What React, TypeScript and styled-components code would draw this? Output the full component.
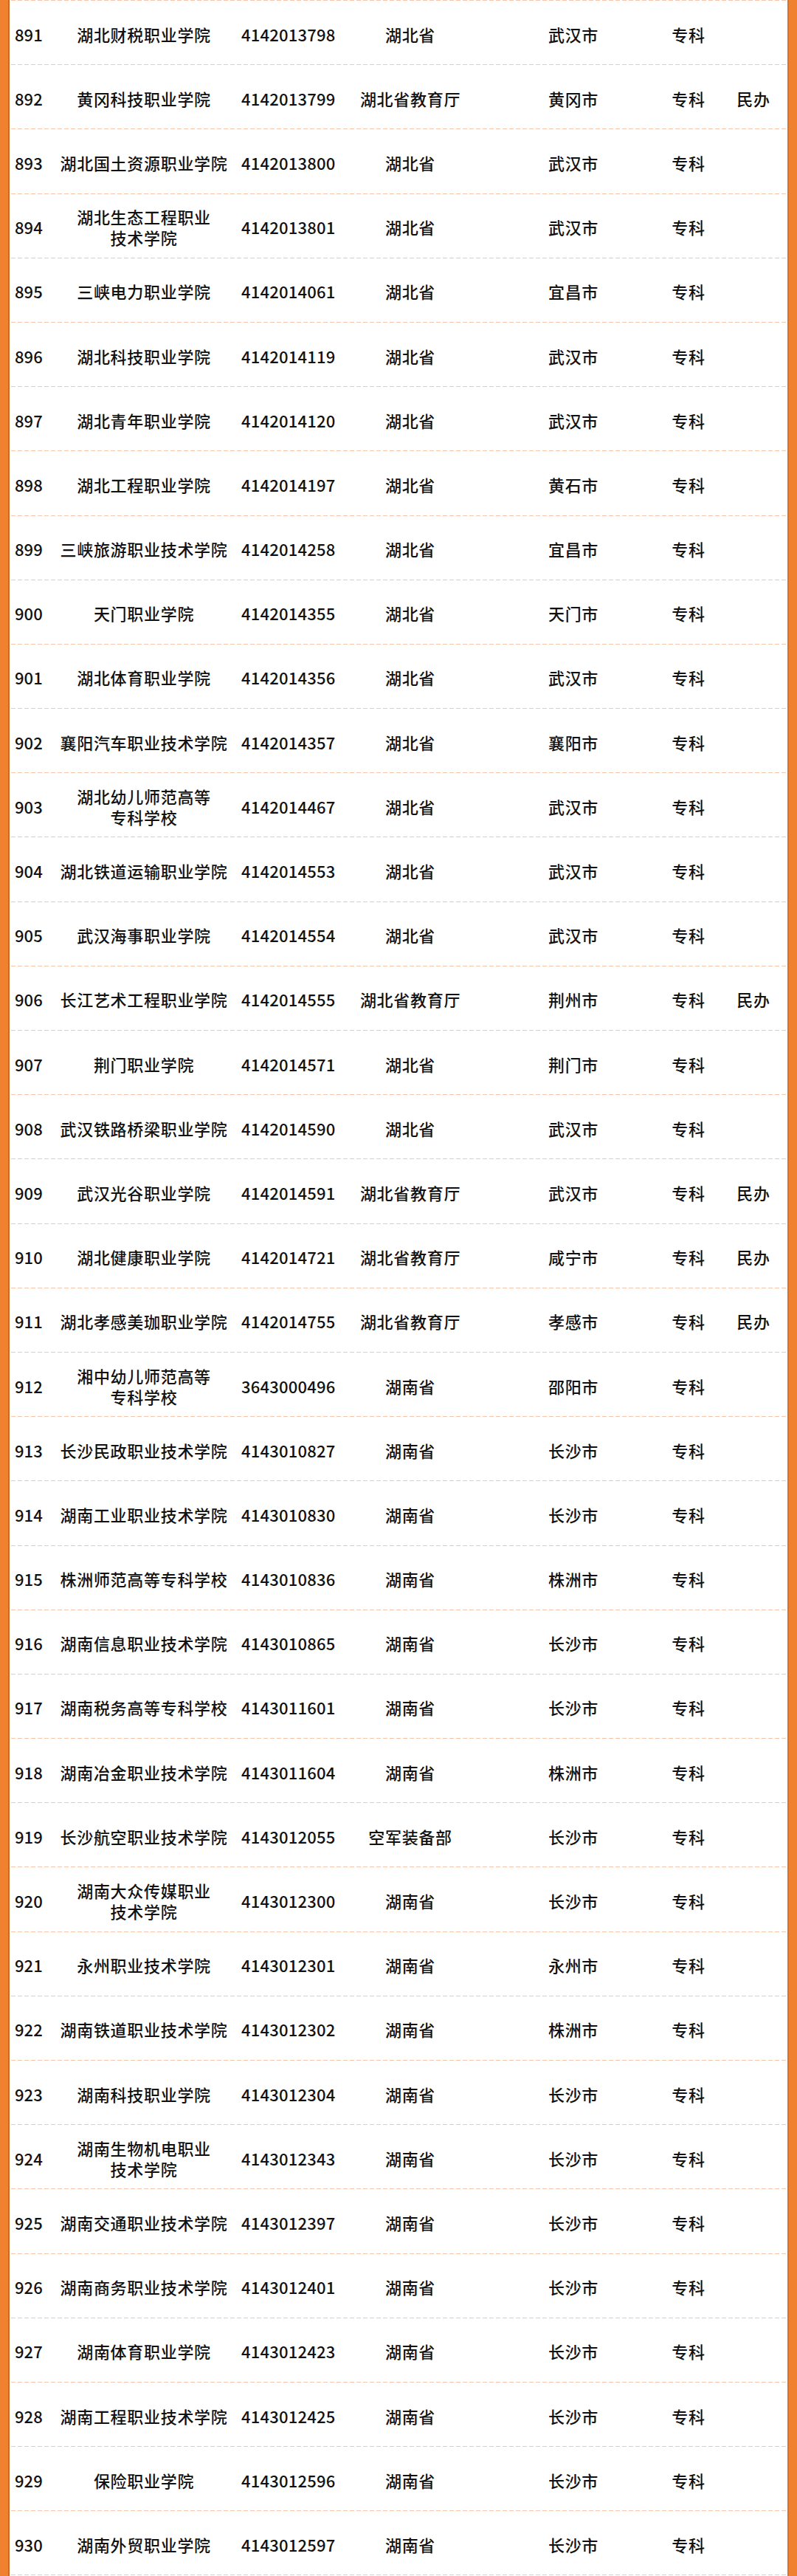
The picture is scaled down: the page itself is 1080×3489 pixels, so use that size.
import React from 'react'
import styled, { createGlobalStyle } from 'styled-components'

interface School {
    no: number,
    name: string[],
    code: string,
    dept: string,
    city: string,
    level: string,
    note?: string
}

const rows: School[] = [
    { no: 891, name: ['湖北财税职业学院'], code: '4142013798', dept: '湖北省', city: '武汉市', level: '专科' },
    { no: 892, name: ['黄冈科技职业学院'], code: '4142013799', dept: '湖北省教育厅', city: '黄冈市', level: '专科', note: '民办' },
    { no: 893, name: ['湖北国土资源职业学院'], code: '4142013800', dept: '湖北省', city: '武汉市', level: '专科' },
    { no: 894, name: ['湖北生态工程职业', '技术学院'], code: '4142013801', dept: '湖北省', city: '武汉市', level: '专科' },
    { no: 895, name: ['三峡电力职业学院'], code: '4142014061', dept: '湖北省', city: '宜昌市', level: '专科' },
    { no: 896, name: ['湖北科技职业学院'], code: '4142014119', dept: '湖北省', city: '武汉市', level: '专科' },
    { no: 897, name: ['湖北青年职业学院'], code: '4142014120', dept: '湖北省', city: '武汉市', level: '专科' },
    { no: 898, name: ['湖北工程职业学院'], code: '4142014197', dept: '湖北省', city: '黄石市', level: '专科' },
    { no: 899, name: ['三峡旅游职业技术学院'], code: '4142014258', dept: '湖北省', city: '宜昌市', level: '专科' },
    { no: 900, name: ['天门职业学院'], code: '4142014355', dept: '湖北省', city: '天门市', level: '专科' },
    { no: 901, name: ['湖北体育职业学院'], code: '4142014356', dept: '湖北省', city: '武汉市', level: '专科' },
    { no: 902, name: ['襄阳汽车职业技术学院'], code: '4142014357', dept: '湖北省', city: '襄阳市', level: '专科' },
    { no: 903, name: ['湖北幼儿师范高等', '专科学校'], code: '4142014467', dept: '湖北省', city: '武汉市', level: '专科' },
    { no: 904, name: ['湖北铁道运输职业学院'], code: '4142014553', dept: '湖北省', city: '武汉市', level: '专科' },
    { no: 905, name: ['武汉海事职业学院'], code: '4142014554', dept: '湖北省', city: '武汉市', level: '专科' },
    { no: 906, name: ['长江艺术工程职业学院'], code: '4142014555', dept: '湖北省教育厅', city: '荆州市', level: '专科', note: '民办' },
    { no: 907, name: ['荆门职业学院'], code: '4142014571', dept: '湖北省', city: '荆门市', level: '专科' },
    { no: 908, name: ['武汉铁路桥梁职业学院'], code: '4142014590', dept: '湖北省', city: '武汉市', level: '专科' },
    { no: 909, name: ['武汉光谷职业学院'], code: '4142014591', dept: '湖北省教育厅', city: '武汉市', level: '专科', note: '民办' },
    { no: 910, name: ['湖北健康职业学院'], code: '4142014721', dept: '湖北省教育厅', city: '咸宁市', level: '专科', note: '民办' },
    { no: 911, name: ['湖北孝感美珈职业学院'], code: '4142014755', dept: '湖北省教育厅', city: '孝感市', level: '专科', note: '民办' },
    { no: 912, name: ['湘中幼儿师范高等', '专科学校'], code: '3643000496', dept: '湖南省', city: '邵阳市', level: '专科' },
    { no: 913, name: ['长沙民政职业技术学院'], code: '4143010827', dept: '湖南省', city: '长沙市', level: '专科' },
    { no: 914, name: ['湖南工业职业技术学院'], code: '4143010830', dept: '湖南省', city: '长沙市', level: '专科' },
    { no: 915, name: ['株洲师范高等专科学校'], code: '4143010836', dept: '湖南省', city: '株洲市', level: '专科' },
    { no: 916, name: ['湖南信息职业技术学院'], code: '4143010865', dept: '湖南省', city: '长沙市', level: '专科' },
    { no: 917, name: ['湖南税务高等专科学校'], code: '4143011601', dept: '湖南省', city: '长沙市', level: '专科' },
    { no: 918, name: ['湖南冶金职业技术学院'], code: '4143011604', dept: '湖南省', city: '株洲市', level: '专科' },
    { no: 919, name: ['长沙航空职业技术学院'], code: '4143012055', dept: '空军装备部', city: '长沙市', level: '专科' },
    { no: 920, name: ['湖南大众传媒职业', '技术学院'], code: '4143012300', dept: '湖南省', city: '长沙市', level: '专科' },
    { no: 921, name: ['永州职业技术学院'], code: '4143012301', dept: '湖南省', city: '永州市', level: '专科' },
    { no: 922, name: ['湖南铁道职业技术学院'], code: '4143012302', dept: '湖南省', city: '株洲市', level: '专科' },
    { no: 923, name: ['湖南科技职业学院'], code: '4143012304', dept: '湖南省', city: '长沙市', level: '专科' },
    { no: 924, name: ['湖南生物机电职业', '技术学院'], code: '4143012343', dept: '湖南省', city: '长沙市', level: '专科' },
    { no: 925, name: ['湖南交通职业技术学院'], code: '4143012397', dept: '湖南省', city: '长沙市', level: '专科' },
    { no: 926, name: ['湖南商务职业技术学院'], code: '4143012401', dept: '湖南省', city: '长沙市', level: '专科' },
    { no: 927, name: ['湖南体育职业学院'], code: '4143012423', dept: '湖南省', city: '长沙市', level: '专科' },
    { no: 928, name: ['湖南工程职业技术学院'], code: '4143012425', dept: '湖南省', city: '长沙市', level: '专科' },
    { no: 929, name: ['保险职业学院'], code: '4143012596', dept: '湖南省', city: '长沙市', level: '专科' },
    { no: 930, name: ['湖南外贸职业学院'], code: '4143012597', dept: '湖南省', city: '长沙市', level: '专科' },
]

const GlobalStyle = createGlobalStyle`
    html, body {
        margin: 0;
        padding: 0;
        background: #ffffff;
    }
`

const Frame = styled.div`
    width: 1080px;
    height: 3489px;
    box-sizing: border-box;
    display: flex;
    background: #fff;
    font-family: "Noto Sans CJK SC", "Noto Sans", sans-serif;
    color: #111;
`

const SideBar = styled.div<{ $side: 'left' | 'right' }>`
    width: 13px;
    flex: none;
    background: #f0812f;
    box-shadow: ${p => p.$side === 'left' ? 'inset -2px 0 0 #c96a28' : 'inset 2px 0 0 #d8722b'};
`

const Table = styled.div`
    flex: 1;
    display: flex;
    flex-direction: column;
    padding-left: 2px;
`

const dash = 'repeating-linear-gradient(90deg, #f6c7aa 0 6px, transparent 6px 9px)'

const Row = styled.div<{ $last: boolean }>`
    height: 87.2px;
    flex: none;
    display: grid;
    grid-template-columns: 48px 264px 120px 218px 224px 88px 88px;
    align-items: center;
    padding-top: 4px;
    box-sizing: border-box;
    background-image: ${dash}${p => p.$last ? `, ${dash}` : ''};
    background-size: 100% 1px${p => p.$last ? ', 100% 1px' : ''};
    background-position: left top${p => p.$last ? ', left bottom' : ''};
    background-repeat: no-repeat;
`

const Cell = styled.div<{ $digits?: boolean }>`
    text-align: center;
    white-space: nowrap;
    font-size: 22px;
    letter-spacing: ${p => p.$digits ? '0.2px' : '0.7px'};
    font-weight: 500;
    line-height: 28px;
`

const NameLine = styled.div``

const App = () => {
    return (
        <>
            <GlobalStyle />
            <Frame>
                <SideBar $side="left" />
                <Table>
                    {rows.map((r, idx) => (
                        <Row key={r.no} $last={idx === rows.length - 1}>
                            <Cell $digits>{r.no}</Cell>
                            <Cell>{r.name.map(n => <NameLine key={n}>{n}</NameLine>)}</Cell>
                            <Cell $digits>{r.code}</Cell>
                            <Cell>{r.dept}</Cell>
                            <Cell>{r.city}</Cell>
                            <Cell>{r.level}</Cell>
                            <Cell>{r.note}</Cell>
                        </Row>
                    ))}
                </Table>
                <SideBar $side="right" />
            </Frame>
        </>
    )
}

export default App
